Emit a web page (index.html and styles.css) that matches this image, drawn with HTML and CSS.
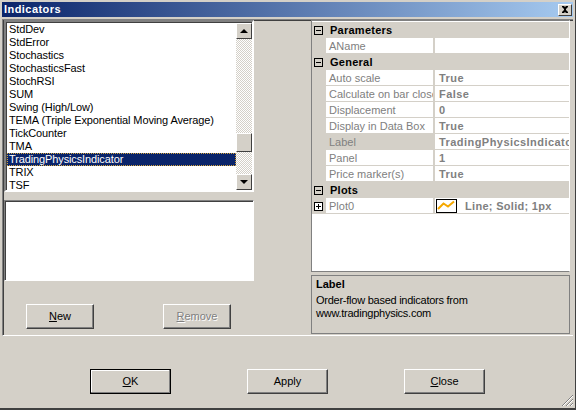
FILE: index.html
```html
<!DOCTYPE html>
<html lang="en">
<head>
<meta charset="utf-8">
<title>Indicators</title>
<link rel="stylesheet" href="styles.css">
</head>
<body>
<div class="window">
  <div class="titlebar">
    <span class="title">Indicators</span>
    <span class="close-x"><svg width="12" height="10" viewBox="0 0 12 10"><path d="M3 1h2l1 1 1-1h2v1l-2 2v1l2 2v1H7L6 7 5 8H3V7l2-2V4L3 2z" fill="#000"/></svg></span>
  </div>
  <div class="main">
    <div class="left">
      <div class="listbox">
        <ul class="list">
          <li>StdDev</li>
          <li>StdError</li>
          <li>Stochastics</li>
          <li>StochasticsFast</li>
          <li>StochRSI</li>
          <li>SUM</li>
          <li>Swing (High/Low)</li>
          <li>TEMA (Triple Exponential Moving Average)</li>
          <li>TickCounter</li>
          <li>TMA</li>
          <li class="selected">TradingPhysicsIndicator</li>
          <li>TRIX</li>
          <li>TSF</li>
        </ul>
        <div class="scrollbar">
          <span class="sbtn"><i class="arrow-up"></i></span>
          <span class="track track-top"></span>
          <span class="thumb"></span>
          <span class="track track-bottom"></span>
          <span class="sbtn"><i class="arrow-down"></i></span>
        </div>
      </div>
      <div class="applied"></div>
      <div class="left-buttons">
        <button class="btn small"><u>N</u>ew</button>
        <button class="btn small disabled"><u>R</u>emove</button>
      </div>
    </div>
    <div class="right">
      <div class="grid">
        <div class="cat"><span class="gutter"><i class="box minus"></i></span><b>Parameters</b></div>
        <div class="prop"><span class="gutter"></span><span class="name">AName</span><span class="val"></span></div>
        <div class="cat"><span class="gutter"><i class="box minus"></i></span><b>General</b></div>
        <div class="prop"><span class="gutter"></span><span class="name">Auto scale</span><span class="val">True</span></div>
        <div class="prop"><span class="gutter"></span><span class="name">Calculate on bar close</span><span class="val">False</span></div>
        <div class="prop"><span class="gutter"></span><span class="name">Displacement</span><span class="val">0</span></div>
        <div class="prop"><span class="gutter"></span><span class="name">Display in Data Box</span><span class="val">True</span></div>
        <div class="prop active"><span class="gutter"></span><span class="name">Label</span><span class="val">TradingPhysicsIndicator</span></div>
        <div class="prop"><span class="gutter"></span><span class="name">Panel</span><span class="val">1</span></div>
        <div class="prop"><span class="gutter"></span><span class="name">Price marker(s)</span><span class="val">True</span></div>
        <div class="cat"><span class="gutter"><i class="box minus"></i></span><b>Plots</b></div>
        <div class="prop"><span class="gutter"><i class="box plus"></i></span><span class="name">Plot0</span><span class="val plot"><svg class="swatch" width="21" height="14" viewBox="0 0 21 14"><rect x=".5" y=".5" width="20" height="13" fill="#fff" stroke="#000"/><path d="M2 10 7.5 4.5 12 7.5 18 2.5" fill="none" stroke="#f5a800" stroke-width="2"/></svg><span class="plot-text">Line; Solid; 1px</span></span></div>
      </div>
      <div class="help">
        <b>Label</b>
        <p>Order-flow based indicators from<br>www.tradingphysics.com</p>
      </div>
    </div>
  </div>
  <div class="footer">
    <button class="btn big default"><u>O</u>K</button>
    <button class="btn big">Apply</button>
    <button class="btn big"><u>C</u>lose</button>
  </div>
  <svg class="grip" width="13" height="13" viewBox="0 0 13 13"><path d="M12 1 1 12M12 5 5 12M12 9 9 12" stroke="#808080" fill="none"/><path d="M12 2 2 12M12 6 6 12M12 10 10 12" stroke="#fff" fill="none"/></svg>
</div>
</body>
</html>
```
FILE: styles.css
```css
* { box-sizing: border-box; }
html, body { margin: 0; padding: 0; }
body { width: 576px; height: 410px; overflow: hidden; background: #d4d0c8; font: 11px/13px "Liberation Sans", Arial, sans-serif; color: #000; }
.window { position: relative; width: 576px; height: 410px; padding: 2px 2px 1px 2px; background: #d4d0c8; display: flex; flex-direction: column; border-right: 1px solid #404040; border-bottom: 2px solid #404040; }
.titlebar { height: 15px; flex: none; display: flex; align-items: center; justify-content: space-between; padding: 0 2px 0 2px; background: linear-gradient(90deg, #0a246a, #a6caf0); color: #fff; font-weight: bold; font-size: 11px; letter-spacing: .45px; }
.close-x { width: 14px; height: 12px; background: #d4d0c8; border: 1px solid; border-color: #fff #404040 #404040 #fff; display: flex; align-items: center; justify-content: center; margin-right: -1px; }
.main { flex: none; height: 317px; margin-top: 2px; display: flex; justify-content: space-between; border-left: 1px solid #808080; border-top: 1px solid #808080; border-bottom: 1px solid #fff; box-shadow: inset 1px 1px 0 #404040; padding: 0 3px 0 1px; }
.left { width: 250px; }
.listbox { height: 172px; display: flex; border: 2px solid; border-color: #808080 #fff #fff #808080; box-shadow: inset 1px 1px 0 #404040; padding: 1px 0 0 1px; }
.list { flex: 1; margin: 0; padding: 0; list-style: none; background: #fff; overflow: hidden; letter-spacing: -.12px; }
.list li { height: 13px; line-height: 12px; padding-left: 2px; white-space: nowrap; }
.list .selected { background: #0a246a; color: #fff; outline: 1px dotted #d4a43c; outline-offset: -1px; }
.scrollbar { width: 16px; flex: none; display: flex; flex-direction: column; }
.sbtn, .thumb { flex: none; width: 16px; height: 16px; background: #d4d0c8; border: 1px solid; border-color: #fff #404040 #404040 #fff; display: flex; align-items: center; justify-content: center; }
.thumb { height: 19px; }
.track { background: repeating-conic-gradient(#d4d0c8 0 25%, #fff 0 50%) 0 0 / 2px 2px; }
.track-top { height: 94px; flex: none; }
.track-bottom { flex: 1; }
.arrow-up { width: 0; height: 0; border: 4px solid transparent; border-top: 0; border-bottom-color: #000; }
.arrow-down { width: 0; height: 0; border: 4px solid transparent; border-bottom: 0; border-top-color: #000; }
.applied { height: 81px; margin-top: 8px; background: #fff; border: 1px solid; border-color: #808080 #fff #fff #808080; box-shadow: inset 1px 1px 0 #404040; }
.left-buttons { display: flex; gap: 69px; padding: 23px 0 0 22px; }
.btn { margin: 0; padding: 0; font: inherit; color: #000; background: #d4d0c8; border: 1px solid; border-color: #fff #404040 #404040 #fff; box-shadow: inset -1px -1px 0 #808080; }
.btn u { text-decoration: underline; }
.small { width: 68px; height: 25px; }
.disabled { color: #808080; text-shadow: 1px 1px 0 #fff; }
.right { width: 259px; display: flex; flex-direction: column; gap: 3px; }
.grid { height: 252px; background: #fff; border: 1px solid; border-color: #808080 #fff #808080 #808080; padding-top: 1px; }
.cat { height: 16px; display: flex; align-items: center; background: #d4d0c8; }
.cat b { padding-left: 4px; letter-spacing: .25px; }
.prop { height: 16px; display: flex; background: #fff; border-bottom: 1px solid #d4d0c8; color: #808080; }
.gutter { width: 14px; height: 16px; flex: none; background: #d4d0c8; display: flex; align-items: center; justify-content: center; padding-right: 1px; }
.prop .name { width: 109px; flex: none; padding: 2px 0 0 3px; overflow: hidden; white-space: nowrap; border-right: 2px solid #d4d0c8; }
.val { flex: 1; padding: 2px 0 0 4px; font-weight: bold; white-space: nowrap; overflow: hidden; letter-spacing: .45px; }
.active .name { background: #d4d0c8; }
.plot { display: flex; align-items: flex-start; padding: 1px 0 0 1px; letter-spacing: .3px; }
.swatch { flex: none; }
.plot-text { padding: 1px 0 0 8px; }
.box { position: relative; display: block; width: 9px; height: 9px; background: #fff; border: 1px solid #000; }
.box::before { content: ""; position: absolute; left: 1px; top: 3px; width: 5px; height: 1px; background: #000; }
.plus::after { content: ""; position: absolute; left: 3px; top: 1px; width: 1px; height: 5px; background: #000; }
.minus { background: transparent; }
.help { height: 59px; padding: 2px 4px; border: 1px solid #808080; }
.help p { margin: 0; padding-top: 3px; letter-spacing: -.25px; }
.footer { flex: 1; display: flex; justify-content: flex-start; gap: 76px; padding: 33px 0 0 88px; }
.big { width: 81px; height: 25px; }
.default { border: 1px solid #000; box-shadow: inset -1px -1px 0 #808080, inset 1px 1px 0 #fff; }
.grip { position: absolute; right: 1px; bottom: 1px; }
```
